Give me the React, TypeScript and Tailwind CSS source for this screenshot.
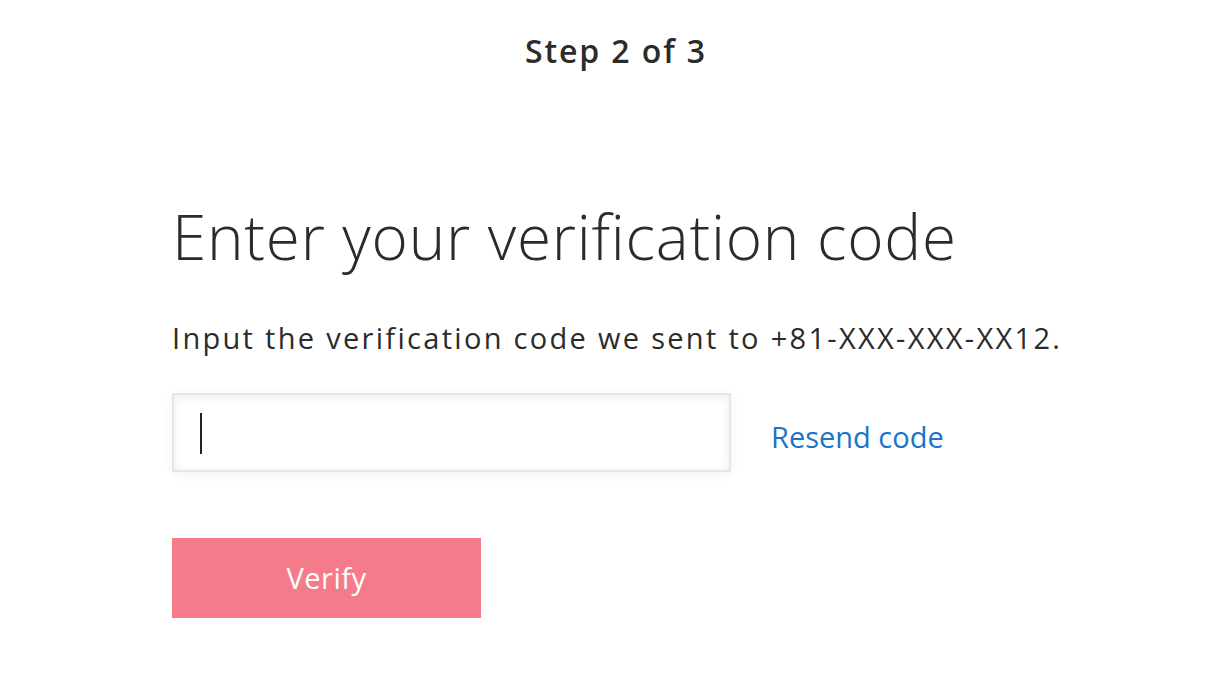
export default function App() {
  return (
    <div
      className="min-h-[680px] w-full bg-white text-[#2b2b2b]"
      style={{ fontFamily: '"Open Sans", "Liberation Sans", sans-serif' }}
    >
      <div className="pl-[172px] pr-[162px]">
        <div className="pt-[29px] text-center text-[32px] font-semibold leading-[44px] tracking-[1.9px]">
          Step 2 of 3
        </div>

        <h1 className="mt-[123px] text-[62px] font-light leading-[80px] tracking-[0.75px]">
          Enter your verification code
        </h1>

        <p className="mt-[42px] whitespace-nowrap text-[29px] leading-[40px] tracking-[2.3px]">
          Input the verification code we sent to +81-XXX-XXX-XX12.
        </p>

        <div className="mt-[35px] flex items-center gap-[40px]">
          <div className="relative h-[79px] w-[559px] border-2 border-[#e6e6e6] bg-white shadow-[inset_0_2px_8px_rgba(0,0,0,0.08),0_2px_10px_rgba(0,0,0,0.06)]">
            <div className="absolute left-[26px] top-[18px] h-[41px] w-[1.5px] bg-[#222]" />
          </div>
          <a className="pt-[8px] text-[29px] text-[#1b74c9]" href="#">
            Resend code
          </a>
        </div>

        <button className="mt-[66px] flex h-[80px] w-[309px] items-center justify-center bg-[#f47c8a] text-[29px] tracking-[0.5px] text-white">
          Verify
        </button>
      </div>
    </div>
  );
}
